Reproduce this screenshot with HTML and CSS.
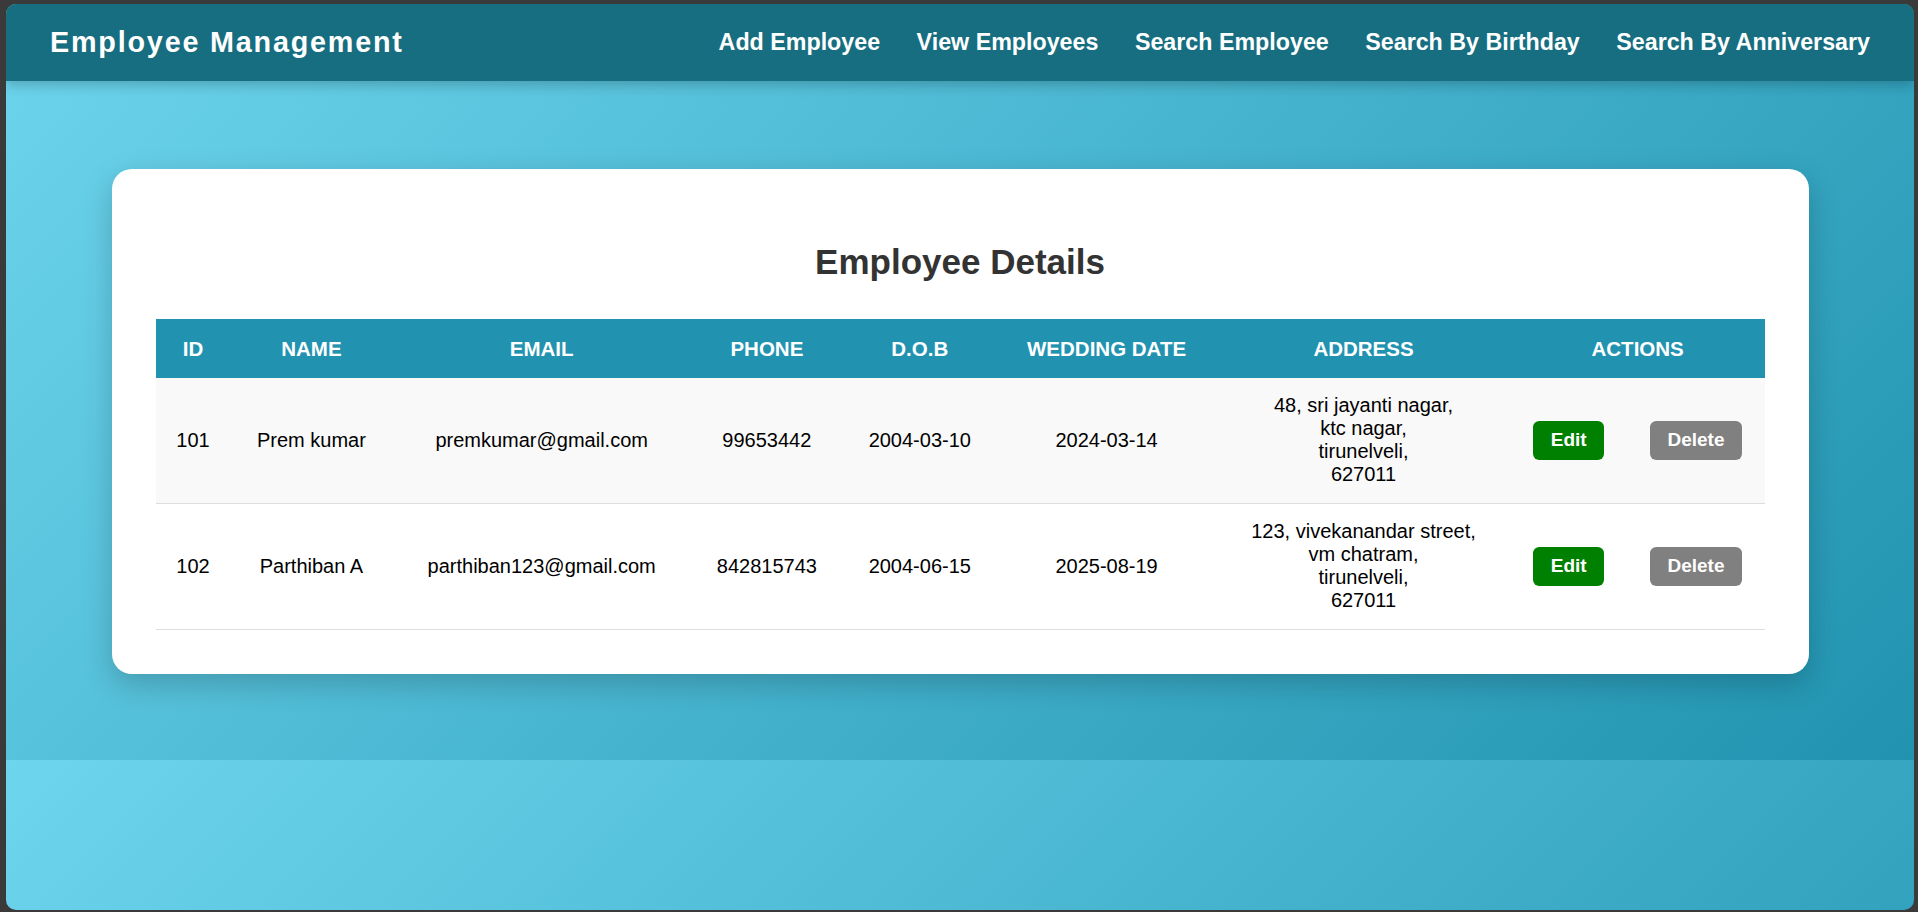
FILE: index.html
```html
<!DOCTYPE html>
<html lang="en">
<head>
<meta charset="utf-8">
<title>Employee Management</title>
<link rel="stylesheet" href="styles.css">
</head>
<body>
<div class="window">
  <nav class="navbar">
    <div class="brand">Employee Management</div>
    <div class="nav-links">
      <a href="#">Add Employee</a>
      <a href="#">View Employees</a>
      <a href="#">Search Employee</a>
      <a href="#">Search By Birthday</a>
      <a href="#">Search By Anniversary</a>
    </div>
  </nav>
  <main class="card">
    <h2 class="card-title">Employee Details</h2>
    <table class="emp-table">
      <tr>
        <th>ID</th>
        <th>NAME</th>
        <th>EMAIL</th>
        <th>PHONE</th>
        <th>D.O.B</th>
        <th>WEDDING DATE</th>
        <th>ADDRESS</th>
        <th>ACTIONS</th>
      </tr>
      <tr>
        <td>101</td>
        <td>Prem kumar</td>
        <td>premkumar@gmail.com</td>
        <td>99653442</td>
        <td>2004-03-10</td>
        <td>2024-03-14</td>
        <td>48, sri jayanti nagar,<br>ktc nagar,<br>tirunelveli,<br>627011</td>
        <td><div class="actions"><button class="btn btn-edit">Edit</button><button class="btn btn-delete">Delete</button></div></td>
      </tr>
      <tr>
        <td>102</td>
        <td>Parthiban A</td>
        <td>parthiban123@gmail.com</td>
        <td>842815743</td>
        <td>2004-06-15</td>
        <td>2025-08-19</td>
        <td>123, vivekanandar street,<br>vm chatram,<br>tirunelveli,<br>627011</td>
        <td><div class="actions"><button class="btn btn-edit">Edit</button><button class="btn btn-delete">Delete</button></div></td>
      </tr>
    </table>
  </main>
</div>
</body>
</html>
```
FILE: styles.css
```css
* { box-sizing: border-box; }

html, body {
  margin: 0;
  height: 912px;
}

body {
  background: #3a3a3a;
  padding: 4px 4px 2px 6px;
  font-family: "Liberation Sans", Arial, sans-serif;
  overflow: hidden;
}

.window {
  height: 906px;
  border-radius: 10px;
  overflow: hidden;
  background-image: linear-gradient(135deg, #6dd5ed, #2193b0);
  background-size: 100% 756px;
  background-repeat: repeat-y;
  display: flow-root;
}

.navbar {
  height: 77px;
  background: #176e80;
  display: flex;
  align-items: center;
  justify-content: space-between;
  padding: 0 44px;
  box-shadow: 0 4px 12px rgba(0, 0, 0, 0.22);
  position: relative;
}

.brand {
  color: #fff;
  font-weight: bold;
  font-size: 28.75px;
  letter-spacing: 1.8px;
}

.nav-links {
  display: flex;
  gap: 36.5px;
}

.nav-links a {
  color: #fff;
  text-decoration: none;
  font-weight: bold;
  font-size: 23.25px;
}

.card {
  display: block;
  max-width: 1697px;
  margin: 88px auto 86px;
  background: #fff;
  border-radius: 20px;
  padding: 44px;
  box-shadow: 0 10px 30px rgba(0, 0, 0, 0.2);
}

.card-title {
  text-align: center;
  color: #333;
  font-size: 35px;
  margin: 29px 0 36.5px;
}

.emp-table {
  width: 100%;
  border-collapse: collapse;
  font-size: 20px;
  line-height: 23px;
  color: #000;
}

.emp-table th {
  background: #2193b0;
  color: #fff;
  font-weight: bold;
  font-size: 20.5px;
  padding: 18px 16px;
  text-align: center;
}

.emp-table td {
  padding: 16.5px 16px;
  text-align: center;
  border-bottom: 1px solid #ddd;
}

.emp-table tr:nth-child(even) td {
  background: #f9f9f9;
}

.actions {
  display: flex;
  justify-content: space-between;
  align-items: center;
}

.btn {
  font-family: "Liberation Sans", Arial, sans-serif;
  font-weight: bold;
  font-size: 19px;
  color: #fff;
  border: none;
  border-radius: 6.25px;
  padding: 8.75px 17.75px;
  margin: 0 6.25px;
  line-height: 21.5px;
  cursor: pointer;
}

.btn-edit { background: #008000; }
.btn-delete { background: #808080; }
```
